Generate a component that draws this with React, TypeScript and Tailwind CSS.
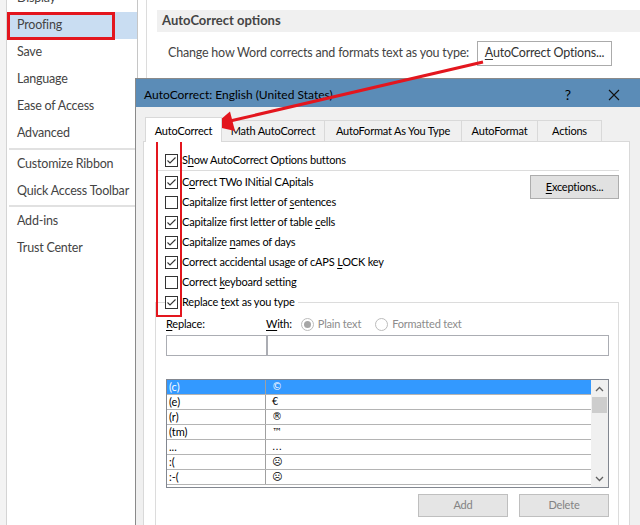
import { ReactNode } from 'react'

const sideTop = ['Display', 'Proofing', 'Save', 'Language', 'Ease of Access', 'Advanced']
const sideMid = ['Customize Ribbon', 'Quick Access Toolbar']
const sideBottom = ['Add-ins', 'Trust Center']

const tabs = [
  { label: 'AutoCorrect', w: 'w-[77px]', active: true },
  { label: 'Math AutoCorrect', w: 'w-[103px]' },
  { label: 'AutoFormat As You Type', w: 'w-[137px]' },
  { label: 'AutoFormat', w: 'w-[76px]' },
  { label: 'Actions', w: 'w-[64px]' }
]

const entries = [
  ['(c)', '©'],
  ['(e)', '€'],
  ['(r)', '®'],
  ['(tm)', '™'],
  ['...', '…'],
  [':(', '☹'],
  [':-(', '☹']
]

function SideItem({ label, active }: { label: string; active?: boolean }) {
  return (
    <li
      className={`h-[27px] flex items-center pl-[10px] whitespace-nowrap ${
        active ? 'bg-[#c9ddf2]' : ''
      }`}
    >
      {label}
    </li>
  )
}

function Check({ checked }: { checked?: boolean }) {
  return (
    <span className="w-[13px] h-[13px] shrink-0 border border-[#333] bg-white flex items-center justify-center">
      {checked && (
        <svg width="11" height="11" viewBox="0 0 11 11">
          <polyline
            points="1.5,5.5 4,8 9.5,2.5"
            fill="none"
            stroke="#333"
            strokeWidth="1.1"
          />
        </svg>
      )}
    </span>
  )
}

function CheckRow({ checked, children }: { checked?: boolean; children: ReactNode }) {
  return (
    <div className="h-[20px] flex items-center gap-[4px] pl-[9px] whitespace-nowrap">
      <Check checked={checked} />
      <span>{children}</span>
    </div>
  )
}

function U({ children }: { children: ReactNode }) {
  return <span className="underline underline-offset-2">{children}</span>
}

function Radio({ dot }: { dot?: boolean }) {
  return (
    <span className="w-[13px] h-[13px] rounded-full border border-[#bcbcbc] bg-white flex items-center justify-center">
      {dot && <span className="w-[7px] h-[7px] rounded-full bg-[#a6a6a6]" />}
    </span>
  )
}

function Chevron({ up }: { up?: boolean }) {
  return (
    <svg width="9" height="6" viewBox="0 0 9 6">
      <polyline
        points={up ? '1,5 4.5,1.5 8,5' : '1,1 4.5,4.5 8,1'}
        fill="none"
        stroke="#606060"
        strokeWidth="1.3"
      />
    </svg>
  )
}

export default function App() {
  return (
    <div className="relative w-[640px] h-[525px] overflow-hidden bg-white font-['Lato',sans-serif] text-[#444]">
      <div className="flex h-full">
        <div className="w-[7px] bg-[#f3f3f3] border-r border-[#d4d4d4]" />
        <nav className="w-[131px] border-r border-[#c6c6c6] text-[12.5px] tracking-[-0.2px]">
          <ul className="-mt-[15px]">
            {sideTop.map((s) => (
              <SideItem key={s} label={s} active={s === 'Proofing'} />
            ))}
          </ul>
          <div className="mx-[2px] my-[1px] h-[2px] bg-[#e1e1e1]" />
          <ul>
            {sideMid.map((s) => (
              <SideItem key={s} label={s} />
            ))}
          </ul>
          <div className="mx-[2px] mb-[1px] h-[2px] bg-[#e1e1e1]" />
          <ul>
            {sideBottom.map((s) => (
              <SideItem key={s} label={s} />
            ))}
          </ul>
        </nav>
        <div className="w-[9px] border-r border-[#dcdcdc]" />
        <main className="flex-1 pl-[10px] pt-[10px]">
          <div className="h-[22px] bg-[#f0f0f0] pl-[5px] flex items-center text-[13px] font-bold text-[#444]">
            AutoCorrect options
          </div>
          <div className="mt-[9px] flex items-center text-[12.5px] tracking-[-0.2px] whitespace-nowrap">
            <span className="pl-[11px] w-[320px]">
              Change how Word corrects and formats text as you type:
            </span>
            <button className="w-[135px] h-[25px] border border-[#ababab] bg-white text-[#333]">
              <U>A</U>utoCorrect Options...
            </button>
          </div>
        </main>
      </div>

      {/* red highlight round Proofing */}
      <div className="absolute left-[7px] top-[12px] w-[108px] h-[28px] border-[3px] border-[#e3161e]" />

      {/* AutoCorrect dialog */}
      <section className="absolute left-[135px] top-[78px] w-[511px] h-[460px] border border-[#8a8a8a] bg-[#f0f0f0] text-black text-[11px] tracking-[-0.2px] flex flex-col whitespace-nowrap">
        <header className="h-[28px] shrink-0 bg-[#5b8cb7] flex items-center pl-[8px] pt-[3px] text-[12px] tracking-normal">
          <span className="flex-1">AutoCorrect: English (United States)</span>
          <span className="w-[46px] text-center text-[14px]">?</span>
          <span className="w-[46px] flex justify-center">
            <svg width="12" height="12" viewBox="0 0 12 12">
              <path d="M1 1L11 11M11 1L1 11" stroke="#111" strokeWidth="1.1" />
            </svg>
          </span>
          <span className="w-[8px]" />
        </header>
        <div className="pl-[7px] pt-[9px] flex-1 flex flex-col">
          <div className="flex items-end h-[25px] ml-[2px] shrink-0">
            {tabs.map((t) =>
              t.active ? (
                <div
                  key={t.label}
                  className={`${t.w} h-[25px] -mb-px z-10 bg-white border border-b-0 border-[#d9d9d9] flex items-center justify-center pt-[2px]`}
                >
                  {t.label}
                </div>
              ) : (
                <div
                  key={t.label}
                  className={`${t.w} h-[21px] bg-[#f0f0f0] border border-l-0 border-b-0 border-[#d9d9d9] flex items-center justify-center`}
                >
                  {t.label}
                </div>
              )
            )}
          </div>
          <div className="w-[487px] flex-1 bg-white border border-[#d9d9d9] pt-[8px] pl-[12px] pr-[10px]">
            <CheckRow checked>
              S<U>h</U>ow AutoCorrect Options buttons
            </CheckRow>
            <div className="h-px bg-[#dcdcdc] ml-[1px]" />
            <div className="flex mt-[1px]">
              <div className="flex-1">
                <CheckRow checked>
                  C<U>o</U>rrect TWo INitial CApitals
                </CheckRow>
                <CheckRow>
                  Capitalize first letter of <U>s</U>entences
                </CheckRow>
                <CheckRow checked>
                  Capitalize first letter of table <U>c</U>ells
                </CheckRow>
                <CheckRow checked>
                  Capitalize <U>n</U>ames of days
                </CheckRow>
                <CheckRow checked>
                  Correct accidental usage of cAPS <U>L</U>OCK key
                </CheckRow>
                <CheckRow>
                  Correct <U>k</U>eyboard setting
                </CheckRow>
              </div>
              <button className="mt-[3px] w-[89px] h-[24px] bg-[#e1e1e1] border border-[#adadad]">
                <U>E</U>xceptions...
              </button>
            </div>
            <fieldset className="border border-[#dcdcdc] pl-[10px] pr-[9px] -ml-[1px]">
              <legend className="pr-[3px] -ml-[1px]">
                <div className="h-[20px] flex items-center gap-[4px]">
                  <Check checked />
                  <span>
                    Replace <U>t</U>ext as you type
                  </span>
                </div>
              </legend>
              <div className="h-[14px] mt-[5px] flex items-center">
                <span className="w-[100px]">
                  <U>R</U>eplace:
                </span>
                <span>
                  <U>W</U>ith:
                </span>
                <span className="ml-[9px] flex items-center gap-[4px] text-[#8c8c8c]">
                  <Radio dot />
                  Plain text
                </span>
                <span className="ml-[14px] flex items-center gap-[4px] text-[#8c8c8c]">
                  <Radio />
                  Formatted text
                </span>
              </div>
              <div className="mt-[4px] flex h-[21px]">
                <div className="w-[101px] border border-[#abadb3] bg-white" />
                <div className="flex-1 border border-[#abadb3] bg-white" />
              </div>
              <div className="mt-[23px] h-[109px] border border-[#828790] flex text-[11px] tracking-normal">
                <div className="flex-1">
                  {entries.map(([a, b], i) => (
                    <div
                      key={a}
                      className={`h-[15px] flex border-b border-[#b4b4b4] ${
                        i === 0 ? 'bg-[#3399ff] text-white' : ''
                      }`}
                    >
                      <span className="w-[99px] pl-[2px] border-r border-[#a0a0a0] leading-[14px]">
                        {a}
                      </span>
                      <span className="pl-[6px] leading-[14px] font-['DejaVu_Sans',sans-serif] text-[10px]">
                        {b}
                      </span>
                    </div>
                  ))}
                </div>
                <div className="w-[17px] bg-[#f0f0f0] flex flex-col items-center">
                  <div className="h-[17px] flex items-center justify-center">
                    <Chevron up />
                  </div>
                  <div className="w-[15px] h-[16px] bg-[#cdcdcd]" />
                  <div className="flex-1" />
                  <div className="h-[17px] flex items-center justify-center">
                    <Chevron />
                  </div>
                </div>
              </div>
              <div className="mt-[6px] flex justify-end gap-[11px]">
                <button className="w-[90px] h-[23px] bg-[#e5e5e5] border border-[#bfbfbf] text-[#838383]">
                  Add
                </button>
                <button className="w-[90px] h-[23px] bg-[#e5e5e5] border border-[#bfbfbf] text-[#838383]">
                  Delete
                </button>
              </div>
              <div className="mt-[4px] h-[20px] flex items-center -ml-[1px]">
                <Check />
              </div>
            </fieldset>
          </div>
        </div>
      </section>

      {/* red box round the check column */}
      <div className="absolute left-[156px] top-[134px] w-[26px] h-[183px] border-2 border-[#e3161e]" />

      {/* red arrow */}
      <svg className="absolute inset-0 pointer-events-none" width="640" height="525">
        <line x1="483" y1="62" x2="230" y2="121" stroke="#e3161e" strokeWidth="3" />
        <polygon points="213,126 235,131 230,111.5" fill="#e3161e" />
      </svg>
    </div>
  )
}
